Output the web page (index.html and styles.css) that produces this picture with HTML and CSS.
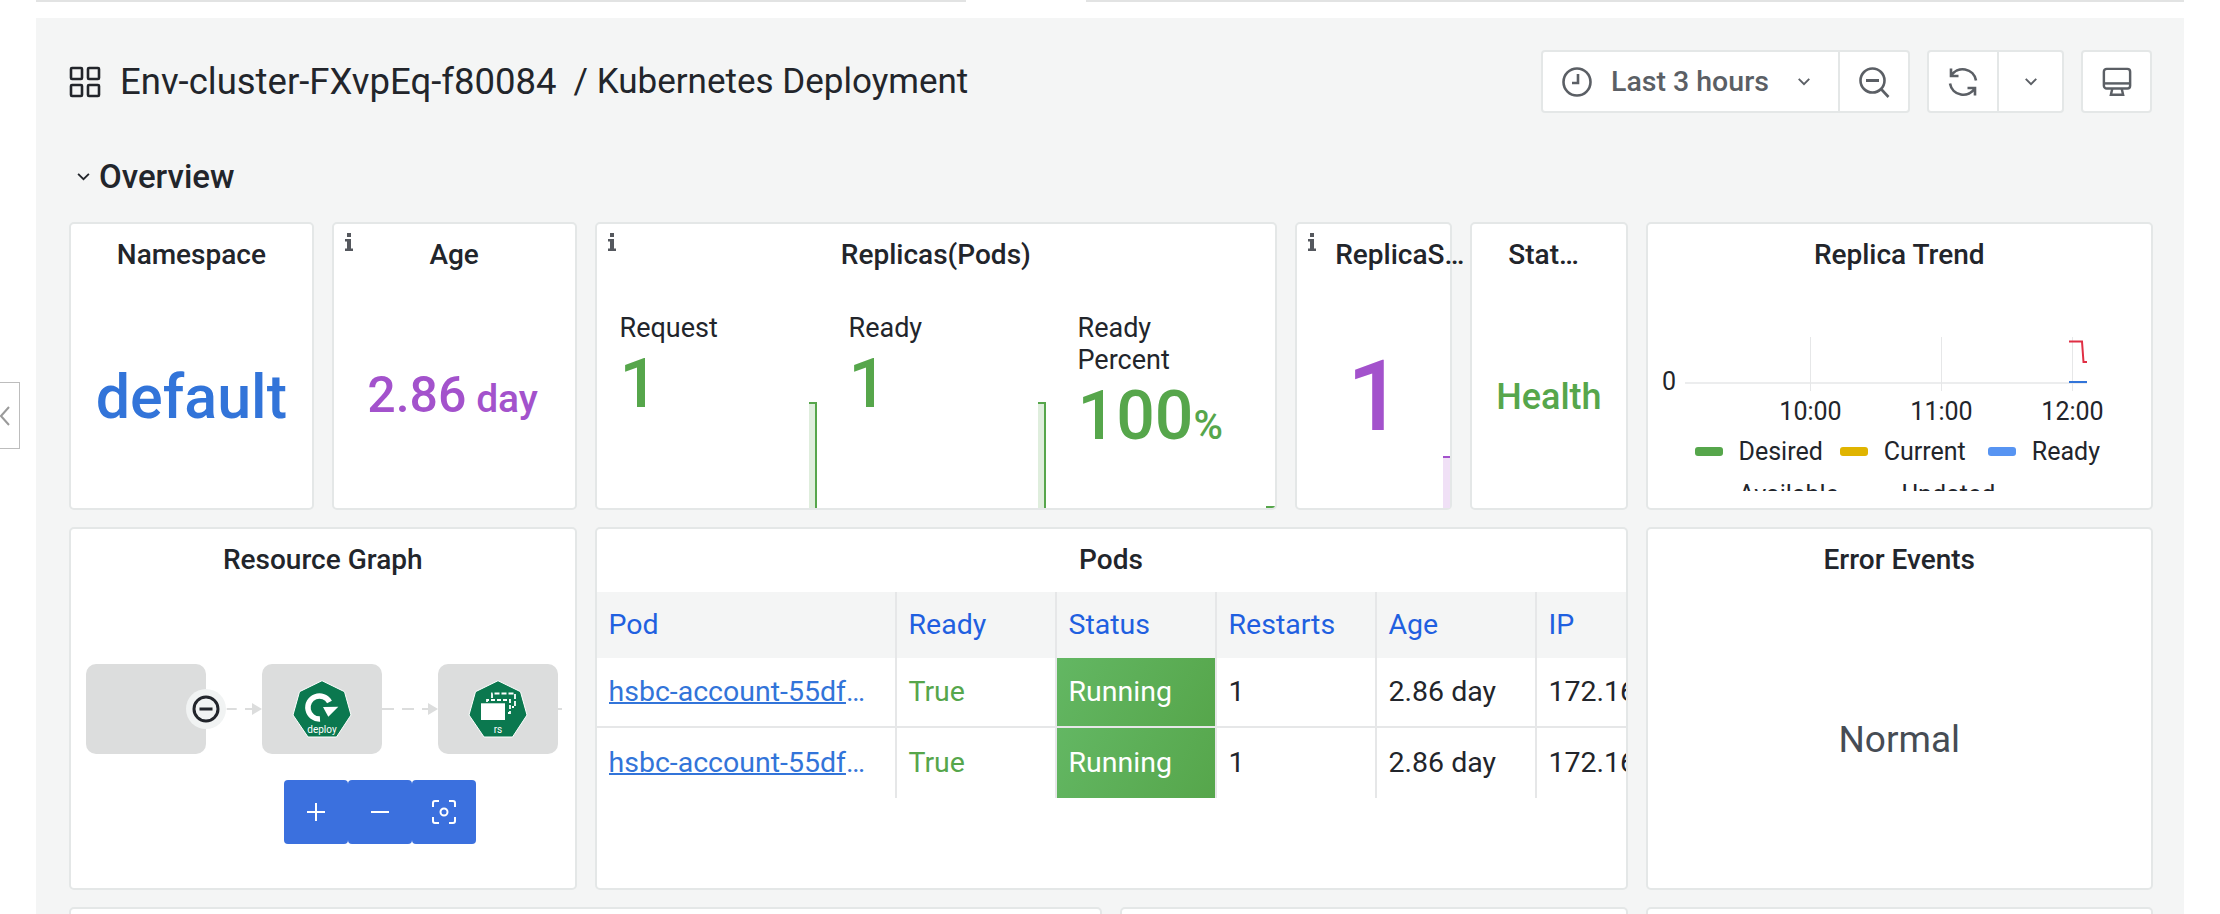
FILE: index.html
```html
<!DOCTYPE html>
<html lang="en">
<head>
<meta charset="utf-8">
<title>Kubernetes Deployment</title>
<link rel="stylesheet" href="styles.css">
</head>
<body>
<div class="topline"><span class="tl-a"></span><span class="tl-gap"></span><span class="tl-b"></span></div>
<button class="side-handle" aria-label="collapse"><svg viewBox="0 0 10 20" width="10" height="20"><path d="M9 1 L1 10 L9 19" fill="none" stroke="#9a9a9a" stroke-width="2"/></svg></button>
<main class="main">
  <header class="head">
    <div class="crumb">
      <svg class="grid-ico" viewBox="0 0 32 32" width="32" height="32"><g fill="none" stroke="#22252b" stroke-width="2.6"><rect x="2" y="2" width="11" height="11" rx="1"/><rect x="19" y="2" width="11" height="11" rx="1"/><rect x="2" y="19" width="11" height="11" rx="1"/><rect x="19" y="19" width="11" height="11" rx="1"/></g></svg>
      <span class="crumb-a">Env-cluster-FXvpEq-f80084</span><span class="crumb-b">/ Kubernetes Deployment</span>
    </div>
    <div class="tools">
      <div class="tgroup">
        <div class="tbtn tb-time">
          <svg viewBox="0 0 32 32" width="32" height="32"><g fill="none" stroke="#5b5f65" stroke-width="2.6"><circle cx="16" cy="16" r="13.5"/><path d="M17 8 V17 H11"/></g></svg>
          <span class="tlabel">Last 3 hours</span>
          <svg class="chev" viewBox="0 0 16 10" width="14" height="9"><path d="M2 2 L8 8 L14 2" fill="none" stroke="#5b5f65" stroke-width="2.2"/></svg>
        </div>
        <div class="tbtn tb-zoom">
          <svg viewBox="0 0 32 32" width="32" height="32"><g fill="none" stroke="#5b5f65" stroke-width="2.6"><circle cx="14.5" cy="14.5" r="12"/><path d="M23.5 23.5 L30.5 31"/><path d="M8 14.5 H21" stroke-width="3"/></g></svg>
        </div>
      </div>
      <div class="tgroup">
        <div class="tbtn tb-refresh">
          <svg viewBox="0 0 32 32" width="32" height="32"><g fill="none" stroke="#5b5f65" stroke-width="2.6"><path d="M4 10 A13.5 13.5 0 0 1 29 14.5"/><path d="M4 2.5 V10 H11.5"/><path d="M28 22 A13.5 13.5 0 0 1 3 17.5"/><path d="M28 29.5 V22 H20.5"/></g></svg>
        </div>
        <div class="tbtn tb-chev">
          <svg class="chev" viewBox="0 0 16 10" width="14" height="9"><path d="M2 2 L8 8 L14 2" fill="none" stroke="#5b5f65" stroke-width="2.2"/></svg>
        </div>
      </div>
      <div class="tgroup">
        <div class="tbtn tb-tv">
          <svg viewBox="0 0 32 32" width="30" height="30"><g fill="none" stroke="#5b5f65" stroke-width="2.6"><rect x="2" y="2" width="28" height="21" rx="3"/><path d="M2 17.5 H30"/><path d="M11 23 L9.5 29.5 H22.5 L21 23"/></g></svg>
        </div>
      </div>
    </div>
  </header>

  <div class="row-title">
    <svg viewBox="0 0 16 10" width="15" height="9"><path d="M2 2 L8 8 L14 2" fill="none" stroke="#22252b" stroke-width="2"/></svg>
    <span>Overview</span>
  </div>

  <section class="dash">
    <article class="panel span3 r1">
      <h2 class="ptitle">Namespace</h2>
      <div class="stat-mid"><span class="v-default">default</span></div>
    </article>

    <article class="panel span3 r1">
      <svg class="info" viewBox="0 0 8 18" width="8" height="18"><path d="M2 0h4v4H2zM0 6h6v9.500h2V18H0v-2.500h2V8.500H0z" fill="#55585e"/></svg>
      <h2 class="ptitle">Age</h2>
      <div class="stat-mid"><span class="v-age">2.86<small> day</small></span></div>
    </article>

    <article class="panel span8 r1">
      <svg class="info" viewBox="0 0 8 18" width="8" height="18"><path d="M2 0h4v4H2zM0 6h6v9.500h2V18H0v-2.500h2V8.500H0z" fill="#55585e"/></svg>
      <h2 class="ptitle">Replicas(Pods)</h2>
      <div class="reps">
        <div class="rep">
          <div class="rep-l">Request</div><div class="rep-v">1</div>
          <div class="spark"></div>
        </div>
        <div class="rep">
          <div class="rep-l">Ready</div><div class="rep-v">1</div>
          <div class="spark"></div>
        </div>
        <div class="rep">
          <div class="rep-l">Ready<br>Percent</div><div class="rep-v">100<small>%</small></div>
          <div class="spark spark-low"></div>
        </div>
      </div>
    </article>

    <article class="panel span2 r1 panel-free">
      <svg class="info" viewBox="0 0 8 18" width="8" height="18"><path d="M2 0h4v4H2zM0 6h6v9.500h2V18H0v-2.500h2V8.500H0z" fill="#55585e"/></svg>
      <h2 class="ptitle pt-clip">ReplicaS…</h2>
      <div class="stat-mid"><span class="v-rs">1</span></div>
      <div class="spark spark-rs"></div>
    </article>

    <article class="panel span2 r1">
      <h2 class="ptitle pt-clip pt-stat">Stat…</h2>
      <div class="stat-mid"><span class="v-health">Health</span></div>
    </article>

    <article class="panel span6 r1">
      <h2 class="ptitle">Replica Trend</h2>
      <div class="trend">
        <svg class="trend-svg" viewBox="0 0 508 93" width="508" height="93">
          <g stroke="#e6e7e8" fill="none">
            <path d="M39 46 H441" stroke-width="1.500"/>
            <path d="M164.500 0 V54 M295.500 0 V54 M426.500 0 V54" stroke-width="1"/>
          </g>
          <path d="M423 4.500 H436 L437.500 25 H441" fill="none" stroke="#e02f44" stroke-width="2"/>
          <path d="M423 45 H441" fill="none" stroke="#3274d9" stroke-width="2"/>
          <g class="trend-ticks">
            <text x="16" y="53">0</text>
            <text x="164.500" y="83" text-anchor="middle">10:00</text>
            <text x="295.500" y="83" text-anchor="middle">11:00</text>
            <text x="426.500" y="83" text-anchor="middle">12:00</text>
          </g>
        </svg>
        <ul class="legend">
          <li class="l1a"><i class="sw sw-g"></i>Desired</li>
          <li><i class="sw sw-y"></i>Current</li>
          <li><i class="sw sw-b"></i>Ready</li>
          <li class="l2a">Available</li>
          <li class="l2b">Updated</li>
        </ul>
      </div>
    </article>

    <article class="panel span6 r2">
      <h2 class="ptitle">Resource Graph</h2>
      <div class="graph">
        <div class="flow">
          <div class="node"><span class="collapse"><svg viewBox="0 0 28 28" width="28" height="28"><circle cx="14" cy="14" r="12" fill="none" stroke="#22252b" stroke-width="3"/><path d="M7.500 14 H20.500" stroke="#22252b" stroke-width="3"/></svg></span></div>
          <svg class="edge" viewBox="0 0 56 16" width="56" height="16"><path d="M0 8 H46" stroke="#dcdddd" stroke-width="2" stroke-dasharray="10 8.300" stroke-dashoffset="-2.400" fill="none"/><path d="M46 2 L56 8 L46 14 Z" fill="#dcdddd"/></svg>
          <div class="node">
            <svg class="hept" viewBox="0 0 60 60" width="60" height="60"><path d="M30 1.700 L52.500 12.700 L59 36 L44.500 58 H16 L1 36 L7.500 12.700 Z" fill="#0b784f" stroke="#fff" stroke-width="1"/><path d="M28 40 A11.500 11.500 0 1 1 37.500 23" fill="none" stroke="#fff" stroke-width="5.500"/><path d="M31 28 L46.300 27.700 L36.300 37.700 Z" fill="#fff"/><text x="30" y="53.500" text-anchor="middle" class="hept-t">deploy</text></svg>
          </div>
          <svg class="edge" viewBox="0 0 56 16" width="56" height="16"><path d="M0 8 H46" stroke="#dcdddd" stroke-width="2" stroke-dasharray="12 8" fill="none"/><path d="M46 2 L56 8 L46 14 Z" fill="#dcdddd"/></svg>
          <div class="node">
            <svg class="hept" viewBox="0 0 60 60" width="60" height="60"><path d="M30 1.700 L52.500 12.700 L59 36 L44.500 58 H16 L1 36 L7.500 12.700 Z" fill="#0b784f" stroke="#fff" stroke-width="1"/><rect x="13" y="24.300" width="24" height="16.700" fill="#fff"/><path d="M19 23 V21 H42 V34 H38" fill="none" stroke="#fff" stroke-width="1.800" stroke-dasharray="4 2"/><path d="M24 19 V14.500 H47 V28 H44" fill="none" stroke="#fff" stroke-width="1.800" stroke-dasharray="5 2"/><text x="30" y="53.500" text-anchor="middle" class="hept-t">rs</text></svg>
          </div>
          <svg class="edge edge-tail" viewBox="0 0 4 16" width="4" height="16"><path d="M0 8 H4" stroke="#dcdddd" stroke-width="2"/></svg>
        </div>
        <div class="gbtns">
          <span class="gbtn"><svg viewBox="0 0 20 20" width="20" height="20"><path d="M1 10 H19 M10 1 V19" stroke="#fff" stroke-width="2"/></svg></span>
          <span class="gbtn"><svg viewBox="0 0 20 20" width="20" height="20"><path d="M1 10 H19" stroke="#fff" stroke-width="2"/></svg></span>
          <span class="gbtn"><svg viewBox="0 0 24 24" width="24" height="24"><g fill="none" stroke="#fff" stroke-width="2"><path d="M7 1 H3 Q1 1 1 3 V7 M17 1 H21 Q23 1 23 3 V7 M7 23 H3 Q1 23 1 21 V17 M17 23 H21 Q23 23 23 21 V17"/><circle cx="12" cy="12" r="3.500"/></g></svg></span>
        </div>
      </div>
    </article>

    <article class="panel span12 r2">
      <h2 class="ptitle">Pods</h2>
      <div class="pods">
        <div class="pod-row pod-head">
          <div class="c">Pod</div><div class="c">Ready</div><div class="c">Status</div><div class="c">Restarts</div><div class="c">Age</div><div class="c">IP</div>
        </div>
        <div class="pod-row">
          <div class="c"><a class="plink">hsbc-account-55df6c7b9d-2xk8p</a></div><div class="c c-true">True</div><div class="c c-run">Running</div><div class="c">1</div><div class="c">2.86 day</div><div class="c">172.16.0.21</div>
        </div>
        <div class="pod-row">
          <div class="c"><a class="plink">hsbc-account-55df6c7b9d-7mq4z</a></div><div class="c c-true">True</div><div class="c c-run">Running</div><div class="c">1</div><div class="c">2.86 day</div><div class="c">172.16.0.34</div>
        </div>
      </div>
    </article>

    <article class="panel span6 r2">
      <h2 class="ptitle">Error Events</h2>
      <div class="stat-mid"><span class="v-normal">Normal</span></div>
    </article>

    <article class="panel span12 r3"></article>
    <article class="panel span6 r3"></article>
    <article class="panel span6 r3"></article>
  </section>
</main>
</body>
</html>
```
FILE: styles.css
```css
* { box-sizing: border-box; }
html, body { margin: 0; height: 914px; overflow: hidden; background: #fff; }
body { font-family: Roboto, "Liberation Sans", sans-serif; color: #22252b; position: relative; }

.topline { display: flex; height: 2px; padding-left: 36px; width: 2184px; }
.tl-a { width: 930px; background: #e2e3e3; }
.tl-gap { width: 120px; }
.tl-b { flex: 1; background: #e2e3e3; }

.side-handle { position: absolute; left: -1px; top: 382px; width: 21px; height: 67px; padding: 0; display: flex; align-items: center; justify-content: flex-start; background: #fff; border: 1px solid #bdbdbd; }

.main { margin: 16px 0 0 36px; width: 2148px; height: 896px; background: #f4f5f5; padding: 32px 31px 0 33px; overflow: hidden; }

.head { display: flex; justify-content: space-between; align-items: center; height: 63px; }
.crumb { display: flex; align-items: center; }
.grid-ico { margin-right: 19px; }
.crumb-a { font-size: 36.5px; }
.crumb-b { font-size: 35px; margin-left: 17px; }
.tools { display: flex; gap: 17px; margin-right: 1px; }
.tgroup { display: flex; height: 63px; background: #fff; border: 2px solid #e4e7e7; border-radius: 4px; }
.tbtn { display: flex; align-items: center; justify-content: center; }
.tbtn + .tbtn { border-left: 2px solid #e4e7e7; }
.tb-time { width: 295px; padding: 0 18px; justify-content: flex-start; }
.tlabel { font-size: 28.500px; font-weight: 500; color: #5b5f65; margin-left: 18px; margin-right: 28px; }
.tb-zoom { width: 70px; }
.tb-refresh { width: 68px; }
.tb-chev { width: 65px; }
.tb-tv { width: 67px; }

.row-title { display: flex; align-items: center; gap: 8px; margin-top: 46px; height: 34px; padding-left: 7px; font-size: 33px; font-weight: 500; }

.dash { display: grid; grid-template-columns: repeat(24, 1fr); column-gap: 18px; row-gap: 17px; margin-top: 29px; grid-template-rows: 288px 363px 100px; }
.panel { position: relative; background: #fff; border: 2px solid #e4e7e7; border-radius: 5px; overflow: hidden; display: flex; flex-direction: column; }
.panel-free { overflow: visible; }
.span2 { grid-column: span 2; }
.span3 { grid-column: span 3; }
.span6 { grid-column: span 6; }
.span8 { grid-column: span 8; }
.span12 { grid-column: span 12; }

.ptitle { margin: 0; padding-top: 15px; height: 50px; text-align: center; font-size: 28px; line-height: 32px; font-weight: 500; flex: none; }
.pt-clip { white-space: nowrap; text-align: left; padding-left: 38px; position: relative; }
.pt-stat { padding-left: 36px; }
.info { position: absolute; left: 11px; top: 9px; }

.stat-mid { flex: 1; display: flex; align-items: center; justify-content: center; padding-top: 11px; }
.v-default { font-size: 61px; font-weight: 500; color: #3274d9; }
.v-age { font-size: 50px; font-weight: 500; color: #a352cc; white-space: nowrap; margin: -3px 0 0 -3px; }
.v-age small { font-size: 39px; }
.v-rs { font-size: 98px; font-weight: 500; color: #a352cc; line-height: 1; margin-left: 2px; }
.v-health { font-size: 36px; font-weight: 500; color: #56a64b; }
.v-normal { font-size: 37px; color: #464c54; }

.reps { flex: 1; display: grid; grid-template-columns: repeat(3, 229px); padding-left: 23px; }
.rep { position: relative; padding-top: 38px; }
.rep-l { font-size: 27px; line-height: 32px; }
.rep-v { font-size: 68px; line-height: 80px; font-weight: 500; color: #56a64b; }
.rep-v small { font-size: 40px; }
.spark { position: absolute; right: 0; bottom: 0; }
.rep .spark { width: 8px; height: 106px; background: #dfeedd; border-top: 2px solid #56a64b; border-right: 2px solid #56a64b; right: 32px; }
.rep .spark-low { width: 9px; height: 2px; background: #56a64b; border: 0; }
.spark-rs { width: 7px; height: 52px; background: #f0e0f6; border-top: 2px solid #a352cc; }

.trend { flex: 1; overflow: hidden; margin-bottom: 17px; }
.trend-svg { display: block; margin: 63px 0 0 -2px; }
.trend-ticks text { font-size: 25px; fill: #22252b; font-family: Roboto, sans-serif; }
.legend { list-style: none; margin: 0 0 0 47px; padding: 0; display: flex; flex-wrap: wrap; font-size: 25px; line-height: 43px; width: 440px; }
.legend li { display: flex; align-items: center; gap: 16px; margin-right: 22px; }
.legend .l1a { margin-right: 17px; }
.sw { width: 28px; height: 9px; border-radius: 3px; }
.sw-g { background: #56a64b; }
.sw-y { background: #e0b400; }
.sw-b { background: #5794f2; }
.legend .l2a { margin-left: 44px; }
.legend .l2b { margin-left: 41px; }

.graph { flex: 1; display: flex; flex-direction: column; }
.flow { display: flex; align-items: center; margin: 85px 0 0 15px; }
.node { position: relative; width: 120px; height: 90px; background: #dcdddd; border-radius: 10px; display: flex; align-items: center; justify-content: center; flex: none; }
.edge { flex: none; }
.collapse { position: absolute; right: -20px; top: 25px; width: 40px; height: 40px; border-radius: 50%; background: #f1f3f3; display: flex; align-items: center; justify-content: center; }
.hept-t { font-size: 10px; fill: #fff; font-family: Roboto, sans-serif; }
.gbtns { display: flex; margin: 26px 0 0 213px; }
.gbtn { width: 64px; height: 64px; background: #3b70de; border-radius: 4px; display: flex; align-items: center; justify-content: center; }

.pods { flex: 1; overflow: hidden; margin-top: 13px; }
.pod-row { display: grid; grid-template-columns: 298px repeat(4, 160px) 200px; height: 70px; border-bottom: 2px solid #e6e7e8; font-size: 28.500px; white-space: nowrap; }
.pod-row:last-child { border-bottom: 0; }
.pod-head { height: 66px; background: #f4f5f5; border-bottom: 0; color: #1f60e0; }
.c { display: flex; align-items: center; padding: 0 12px 2px; overflow: hidden; border-left: 2px solid #e6e7e8; min-width: 0; }
.c:first-child { border-left: 0; }
.c-true { color: #56a64b; }
.c-run { color: #fff; background: linear-gradient(120deg, #63b763, #56a64b); }
.plink { display: block; max-width: 258px; overflow: hidden; text-overflow: ellipsis; color: #3274d9; text-decoration: underline; text-decoration-thickness: 2px; }
```
